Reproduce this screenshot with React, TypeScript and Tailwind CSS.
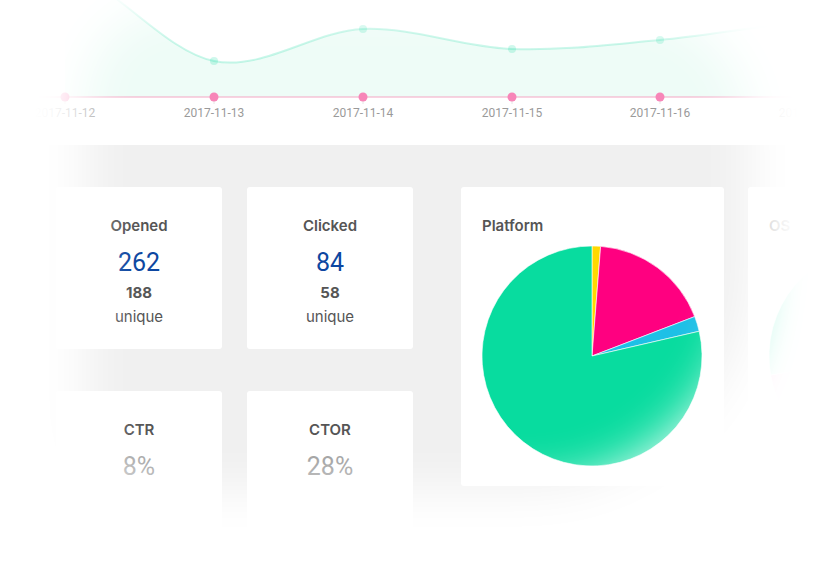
import React from 'react';

const dots = [65, 214, 363, 512, 660, 809];
const dates = ['2017-11-12', '2017-11-13', '2017-11-14', '2017-11-15', '2017-11-16', '2017-11-17'];

const curve =
    'M65 -30 C114.7 -16.5 164.3 51.2 214 61 C263.7 70.8 313.3 31 363 29 C412.7 27 462.3 47.2 512 49 C561.7 50.8 610.3 44.5 660 40 C709.7 35.5 759.3 25.3 809 22';

function Chart() {
    return (
        <svg width="816" height="145" className="block">
            <path d={curve + ' L809 97 L65 97 Z'} fill="rgba(12,214,140,0.07)" />
            <path d={curve} fill="none" stroke="rgba(10,220,160,0.22)" strokeWidth="2" />
            {[[214, 61], [363, 29], [512, 49], [660, 40]].map(([x, y]) => (
                <circle key={x} cx={x} cy={y} r="4" fill="rgba(10,220,160,0.2)" />
            ))}
            <line x1="0" y1="97" x2="816" y2="97" stroke="#f4a6c3" strokeWidth="1" />
            {dots.map((x, i) => (
                <g key={x}>
                    <line x1={x} y1="97" x2={x} y2="104" stroke="#e6e6e6" strokeWidth="1" />
                    <circle cx={x} cy="97" r="4.5" fill="#f786b8" />
                    <text x={x} y="117" textAnchor="middle" fontSize="12" fill="#9a9a9a" fontFamily="Roboto, sans-serif">
                        {dates[i]}
                    </text>
                </g>
            ))}
        </svg>
    );
}

function StatCard({ label, value, valueClass, sub }: { label: string; value: string; valueClass: string; sub?: string }) {
    return (
        <div className="w-[166px] h-[162px] bg-white rounded-[3px] flex flex-col items-center pt-[29px]">
            <div className="text-[15px] leading-5 font-semibold text-[#555]">{label}</div>
            <div className={`mt-[12px] text-[25px] leading-[30px] font-[Roboto,sans-serif] ${valueClass}`}>{value}</div>
            {sub && (
                <>
                    <div className="mt-[5px] text-[15px] leading-5 font-bold text-[#555]">{sub}</div>
                    <div className="mt-[4px] text-[15px] leading-5 text-[#555]">unique</div>
                </>
            )}
        </div>
    );
}

type Slice = { from: number; to: number; color: string };

function arc(cx: number, cy: number, r: number, a0: number, a1: number) {
    const p = (a: number) => {
        const rad = (a * Math.PI) / 180;
        return [cx + r * Math.sin(rad), cy - r * Math.cos(rad)];
    };
    const [x0, y0] = p(a0);
    const [x1, y1] = p(a1);
    const large = a1 - a0 > 180 ? 1 : 0;
    return `M${cx} ${cy} L${x0} ${y0} A${r} ${r} 0 ${large} 1 ${x1} ${y1} Z`;
}

function Pie({ slices }: { slices: Slice[] }) {
    return (
        <svg width="220" height="220" viewBox="0 0 220 220" className="block">
            {slices.map((s, i) => (
                <path key={i} d={arc(110, 110, 110, s.from, s.to)} fill={s.color} stroke="#fff" strokeWidth="0.6" strokeLinejoin="round" />
            ))}
        </svg>
    );
}

function PieCard({ title, slices }: { title: string; slices: Slice[] }) {
    return (
        <div className="w-[263px] h-[299px] shrink-0 bg-white rounded-[3px] px-[21px] pt-[29px]">
            <div className="text-[15px] leading-5 font-semibold text-[#555]">{title}</div>
            <div className="mt-[10px]">
                <Pie slices={slices} />
            </div>
        </div>
    );
}

// clear area of the vignette: rounded rect with its own radius per corner
const L = 86, T = 8, R = 748, B = 490;
const tl = 90, tr = 120, br = 220, bl = 70;
const hole = `M${L + tl} ${T} H${R - tr} A${tr} ${tr} 0 0 1 ${R} ${T + tr} V${B - br} A${br} ${br} 0 0 1 ${R - br} ${B} H${L + bl} A${bl} ${bl} 0 0 1 ${L} ${B - bl} V${T + tl} A${tl} ${tl} 0 0 1 ${L + tl} ${T} Z`;

function Vignette() {
    return (
        <svg width="816" height="576" className="absolute inset-0 pointer-events-none">
            <defs>
                <filter id="vblur" filterUnits="userSpaceOnUse" x="-200" y="-200" width="1216" height="976">
                    <feGaussianBlur stdDeviation="25" />
                </filter>
                <mask id="vmask" maskUnits="userSpaceOnUse" x="0" y="0" width="816" height="576">
                    <rect width="816" height="576" fill="#fff" />
                    <path d={hole} fill="#000" filter="url(#vblur)" />
                </mask>
            </defs>
            <rect width="816" height="576" fill="#fff" mask="url(#vmask)" />
        </svg>
    );
}

export default function App() {
    return (
        <div className="relative w-[816px] h-[576px] overflow-hidden bg-white font-[Inter,sans-serif]">
            <Chart />

            <div className="h-[431px] bg-[#f0f0f0] flex items-start pt-[42px] pl-[56px]">
                <div className="grid grid-cols-[166px_166px] gap-x-[25px] gap-y-[42px] shrink-0">
                    <StatCard label="Opened" value="262" valueClass="text-[#0d47a1]" sub="188" />
                    <StatCard label="Clicked" value="84" valueClass="text-[#0d47a1]" sub="58" />
                    <StatCard label="CTR" value="8%" valueClass="text-[#9e9e9e]" />
                    <StatCard label="CTOR" value="28%" valueClass="text-[#9e9e9e]" />
                </div>
                <div className="ml-[48px] flex gap-6">
                    <PieCard
                        title="Platform"
                        slices={[
                            { from: 0, to: 4.5, color: '#ffd800' },
                            { from: 4.5, to: 69, color: '#ff0080' },
                            { from: 69, to: 77, color: '#1ec0e6' },
                            { from: 77, to: 360, color: '#08dc9f' },
                        ]}
                    />
                    <PieCard
                        title="OS"
                        slices={[
                            { from: 0, to: 180, color: '#08dc9f' },
                            { from: 180, to: 260, color: '#ff0080' },
                            { from: 260, to: 360, color: '#08dc9f' },
                        ]}
                    />
                </div>
            </div>

            <Vignette />
        </div>
    );
}
